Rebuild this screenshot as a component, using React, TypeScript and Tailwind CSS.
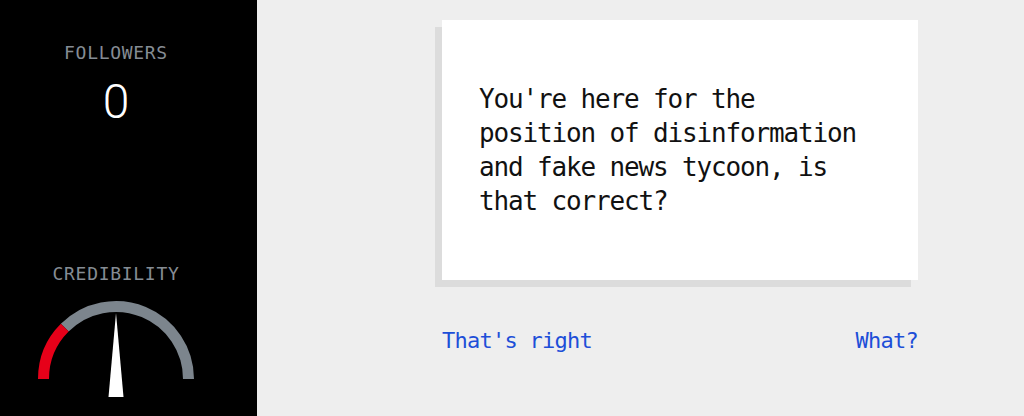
import React from "react"

const mono = { fontFamily: "'DejaVu Sans Mono', 'Liberation Mono', monospace" }

const Gauge = () => {
  return (
    <svg width="156" height="97" viewBox="0 0 156 97">
      {/* gray track */}
      <path
        d="M 26.73 27.73 A 72.5 72.5 0 0 1 150.5 79"
        fill="none"
        stroke="#7c858d"
        strokeWidth="11"
      />
      {/* red part */}
      <path
        d="M 5.5 79 A 72.5 72.5 0 0 1 26.73 27.73"
        fill="none"
        stroke="#e60019"
        strokeWidth="11"
      />
      {/* needle */}
      <polygon points="78,13 70.5,97 85.5,97" fill="#ffffff" />
    </svg>
  )
}

const App = () => {
  return (
    <div className="flex h-[416px] w-[1024px] overflow-hidden" style={mono}>
      {/* sidebar */}
      <aside className="flex w-[257px] shrink-0 flex-col justify-between bg-black pr-[25px] pt-[41px] pb-[19px]">
        <div className="flex flex-col items-center">
          <p className="text-[18px] leading-[24px] tracking-[0.7px] text-[#858c94]">
            FOLLOWERS
          </p>
          <p className="mt-[13px] font-['Roboto',sans-serif] text-[48px] font-light leading-none text-white">
            0
          </p>
        </div>

        <div className="flex flex-col items-center">
          <p className="text-[18px] leading-[24px] tracking-[0.7px] text-[#858c94]">
            CREDIBILITY
          </p>
          <div className="mt-[14px]">
            <Gauge />
          </div>
        </div>
      </aside>

      {/* main */}
      <main className="flex flex-1 flex-col bg-[#eeeeee] pl-[185px] pt-[20px]">
        <div className="flex w-[476px] flex-col">
          {/* card */}
          <div className="flex h-[260px] items-center bg-white pl-[37px] shadow-[-7px_7px_0_#dcdcdc]">
            <p className="w-[392px] text-[26px] leading-[34px] tracking-[-1.15px] text-[#111111]">
              You're here for the position of disinformation and fake news
              tycoon, is that correct?
            </p>
          </div>

          {/* buttons */}
          <div className="mt-[47px] flex justify-between">
            <button className="text-[22px] leading-[28px] tracking-[-0.74px] text-[#1d4ed8]">
              That's right
            </button>
            <button className="text-[22px] leading-[28px] tracking-[-0.74px] text-[#1d4ed8]">
              What?
            </button>
          </div>
        </div>
      </main>
    </div>
  )
}

export default App
